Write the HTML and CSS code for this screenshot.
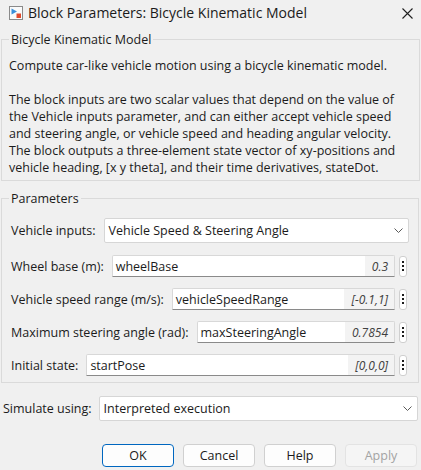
FILE: index.html
```html
<!DOCTYPE html>
<html lang="en">
<head>
<meta charset="utf-8">
<title>Block Parameters: Bicycle Kinematic Model</title>
<link rel="stylesheet" href="styles.css">
</head>
<body>
<div class="dialog">
  <div class="titlebar">
    <svg class="app-icon" width="14" height="14" viewBox="0 0 14 14">
      <rect x="0.5" y="0.5" width="13" height="13" fill="#fafafa" stroke="#8a8a8a"/>
      <path d="M2.5 2.5 L8 5.5 L2.5 8.5 Z" fill="#3a8fd8"/>
      <rect x="7.5" y="7.5" width="4.5" height="4.5" fill="#e2492a"/>
    </svg>
    <span class="title-text">Block Parameters: Bicycle Kinematic Model</span>
    <svg class="close-icon" width="11" height="11" viewBox="0 0 11 11">
      <path d="M0.5 0.5 L10.5 10.5 M10.5 0.5 L0.5 10.5" stroke="#1f1f1f" stroke-width="1.1"/>
    </svg>
  </div>

  <fieldset class="group desc-group">
    <legend>Bicycle Kinematic Model</legend>
    <p>Compute car-like vehicle motion using a bicycle kinematic model.</p>
    <p class="para2">The block inputs are two scalar values that depend on the value of<br>the Vehicle inputs parameter, and can either accept vehicle speed<br>and steering angle, or vehicle speed and heading angular velocity.<br>The block outputs a three-element state vector of xy-positions and<br>vehicle heading, [x y theta], and their time derivatives, stateDot.</p>
  </fieldset>

  <fieldset class="group param-group">
    <legend>Parameters</legend>
    <div class="rows">
      <div class="row row-select">
        <span class="label">Vehicle inputs:</span>
        <div class="select">
          <span>Vehicle Speed &amp; Steering Angle</span>
          <svg class="chev" width="9" height="5" viewBox="0 0 9 5"><path d="M0.5 0.5 L4.5 4.5 L8.5 0.5" fill="none" stroke="#5a5a5a" stroke-width="1"/></svg>
        </div>
      </div>
      <div class="row">
        <span class="label">Wheel base (m):</span>
        <div class="field"><span class="name">wheelBase</span><span class="value">0.3</span></div>
        <div class="dots"><i></i><i></i><i></i></div>
      </div>
      <div class="row">
        <span class="label">Vehicle speed range (m/s):</span>
        <div class="field"><span class="name">vehicleSpeedRange</span><span class="value">[-0.1,1]</span></div>
        <div class="dots"><i></i><i></i><i></i></div>
      </div>
      <div class="row">
        <span class="label">Maximum steering angle (rad):</span>
        <div class="field"><span class="name">maxSteeringAngle</span><span class="value">0.7854</span></div>
        <div class="dots"><i></i><i></i><i></i></div>
      </div>
      <div class="row">
        <span class="label">Initial state:</span>
        <div class="field"><span class="name">startPose</span><span class="value">[0,0,0]</span></div>
        <div class="dots"><i></i><i></i><i></i></div>
      </div>
    </div>
  </fieldset>

  <div class="row sim-row">
    <span class="label">Simulate using:</span>
    <div class="select">
      <span>Interpreted execution</span>
      <svg class="chev" width="9" height="5" viewBox="0 0 9 5"><path d="M0.5 0.5 L4.5 4.5 L8.5 0.5" fill="none" stroke="#5a5a5a" stroke-width="1"/></svg>
    </div>
  </div>

  <div class="buttons">
    <button class="btn btn-default">OK</button>
    <button class="btn">Cancel</button>
    <button class="btn">Help</button>
    <button class="btn btn-disabled" disabled>Apply</button>
  </div>
</div>
</body>
</html>
```
FILE: styles.css
```css
html, body {
  margin: 0;
  padding: 0;
}
body {
  width: 421px;
  height: 470px;
  overflow: hidden;
  background: #f0f0f0;
  font-family: "Open Sans", "Noto Sans", sans-serif;
  font-size: 12.5px;
  color: #1b1b1b;
}
.dialog {
  display: flex;
  flex-direction: column;
}
.titlebar {
  height: 25px;
  display: flex;
  align-items: center;
  padding: 0 8px 0 9px;
}
.app-icon {
  flex: none;
  margin-right: 5px;
  margin-top: 1px;
}
.title-text {
  font-size: 14px;
  color: #1a1a1a;
  line-height: 17px;
}
.close-icon {
  margin-left: auto;
  margin-top: 1px;
}
.group {
  border: 1px solid #dadada;
  min-width: 0;
}
.group legend {
  padding: 0 2px;
  font-size: 12.5px;
  line-height: 17px;
  color: #1b1b1b;
}
.desc-group {
  margin: 6px 1px 0 1px;
  padding: 9px 4px 4px 7px;
}
.desc-group p {
  margin: 0;
  line-height: 17px;
  white-space: nowrap;
}
.desc-group .para2 {
  margin-top: 17px;
}
.param-group {
  margin: 9px 2px 0 1px;
  padding: 11px 9px 6px 9px;
}
.param-group legend {
  margin-left: -2px;
}
.rows {
  display: flex;
  flex-direction: column;
  gap: 11px;
}
.row {
  display: flex;
  align-items: center;
}
.row-select {
  margin-bottom: 1px;
}
.label {
  flex: none;
  font-size: 12.5px;
  margin-right: 8px;
  color: #1b1b1b;
  white-space: nowrap;
}
.select {
  flex: 1;
  height: 25px;
  box-sizing: border-box;
  background: #ffffff;
  border: 1px solid #d6d6d6;
  border-radius: 2px;
  display: flex;
  align-items: center;
  padding: 0 5px 0 4px;
  font-size: 12.5px;
}
.select .chev {
  margin-left: auto;
}
.field {
  flex: 1;
  min-width: 0;
  height: 22px;
  box-sizing: border-box;
  background: #ffffff;
  border: 1px solid #d8d8d8;
  border-bottom-color: #8a8a8a;
  border-radius: 2px 2px 0 0;
  display: flex;
  align-items: stretch;
  font-size: 12.5px;
}
.field .name {
  flex: 1;
  padding-left: 3px;
  display: flex;
  align-items: center;
  white-space: nowrap;
  overflow: hidden;
}
.field .value {
  flex: none;
  background: #f3f3f3;
  font-style: italic;
  font-size: 12px;
  color: #404040;
  padding: 0 6px 0 7px;
  display: flex;
  align-items: center;
}
.dots {
  flex: none;
  width: 8px;
  height: 21px;
  box-sizing: border-box;
  margin-left: 4px;
  margin-right: 2px;
  background: #ffffff;
  border: 1px solid #cfcfcf;
  border-radius: 3px;
  display: flex;
  flex-direction: column;
  align-items: center;
  justify-content: center;
  gap: 2px;
}
.dots i {
  width: 2px;
  height: 2px;
  background: #1b1b1b;
  display: block;
}
.sim-row {
  margin: 13px 3px 0 3px;
}
.sim-row .label {
  margin-right: 7px;
}
.sim-row .select {
  height: 25px;
  padding-left: 4px;
}
.buttons {
  display: flex;
  justify-content: flex-end;
  gap: 9px;
  margin: 23px 4px 0 0;
}
.btn {
  width: 72px;
  height: 23px;
  box-sizing: border-box;
  background: #fdfdfd;
  border: 1px solid #d0d0d0;
  border-radius: 4px;
  font-family: "Open Sans", "Noto Sans", sans-serif;
  font-size: 12.5px;
  color: #1b1b1b;
  padding: 0;
  line-height: 19px;
}
.btn-default {
  border-color: #0067c0;
}
.btn-disabled {
  background: #f5f5f5;
  border-color: #e3e3e3;
  color: #a3a3a3;
}
```
